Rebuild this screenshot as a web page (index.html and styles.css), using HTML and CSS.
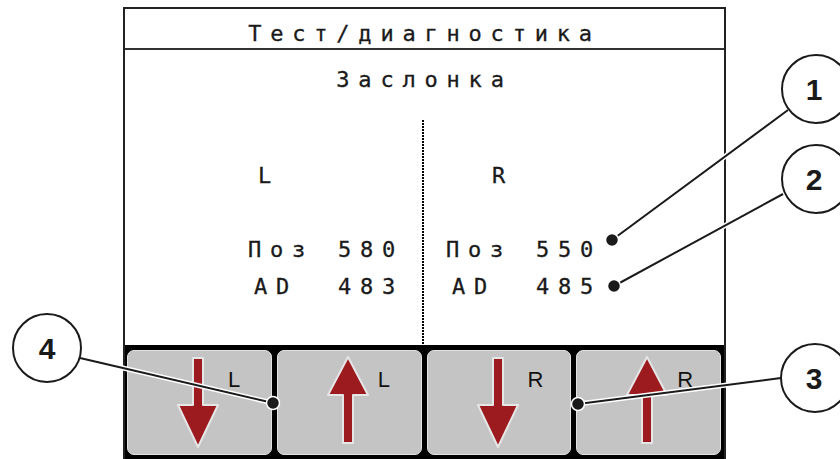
FILE: index.html
```html
<!DOCTYPE html>
<html lang="ru">

<head>
    <meta charset="UTF-8">
    <meta name="viewport" content="width=device-width, initial-scale=1.0">
    <title>Тест/диагностика - Заслонка</title>
    <link rel="stylesheet" href="styles.css">
</head>

<body>

    <div class="screen">
        <div class="title">Тест/диагностика</div>
        <div class="subtitle">Заслонка</div>

        <div class="panel">
            <div class="side side-left">
                <div class="side-name">L</div>
                <div class="reading"><span class="label">Поз</span><span class="value">580</span></div>
                <div class="reading reading-ad"><span class="label">AD</span><span class="value">483</span></div>
            </div>
            <div class="divider"></div>
            <div class="side side-right">
                <div class="side-name">R</div>
                <div class="reading"><span class="label">Поз</span><span class="value">550</span></div>
                <div class="reading reading-ad"><span class="label">AD</span><span class="value">485</span></div>
            </div>
        </div>

        <div class="softkeys">
            <div class="softkey">
                <svg class="arrow" width="44" height="94" viewBox="0 0 44 94">
                    <polygon points="17,3 27,3 27,50 42,50 22,92 2,50 17,50" />
                </svg>
                <span class="key-label">L</span>
            </div>
            <div class="softkey">
                <svg class="arrow" width="44" height="94" viewBox="0 0 44 94">
                    <polygon points="22,2 42,40 27,40 27,88 17,88 17,40 2,40" />
                </svg>
                <span class="key-label">L</span>
            </div>
            <div class="softkey">
                <svg class="arrow" width="44" height="94" viewBox="0 0 44 94">
                    <polygon points="17,3 27,3 27,50 42,50 22,92 2,50 17,50" />
                </svg>
                <span class="key-label">R</span>
            </div>
            <div class="softkey">
                <svg class="arrow" width="44" height="94" viewBox="0 0 44 94">
                    <polygon points="22,2 42,40 27,40 27,88 17,88 17,40 2,40" />
                </svg>
                <span class="key-label">R</span>
            </div>
        </div>
    </div>

    <!-- callouts over the screen -->
    <svg class="callouts" width="840" height="459" viewBox="0 0 840 459">
        <g class="halo">
            <line x1="612" y1="240" x2="788" y2="110" />
            <line x1="614" y1="286" x2="783" y2="194" />
            <line x1="578" y1="404" x2="781" y2="378" />
            <line x1="273" y1="403" x2="80" y2="358" />
        </g>
        <g class="leader">
            <line x1="612" y1="240" x2="788" y2="110" />
            <line x1="614" y1="286" x2="783" y2="194" />
            <line x1="578" y1="404" x2="781" y2="378" />
            <line x1="273" y1="403" x2="80" y2="358" />
        </g>
        <g class="dot">
            <circle cx="612" cy="240" r="6.5" />
            <circle cx="614" cy="286" r="6.5" />
            <circle cx="578" cy="404" r="6.5" />
            <circle cx="273" cy="403" r="6.5" />
        </g>
        <g class="bubble">
            <circle cx="816" cy="89" r="34" />
            <circle cx="816" cy="179" r="34" />
            <circle cx="815" cy="378" r="34" />
            <circle cx="47" cy="348" r="34" />
        </g>
        <g class="num">
            <text x="814" y="100">1</text>
            <text x="814" y="190">2</text>
            <text x="814" y="389">3</text>
            <text x="47" y="359">4</text>
        </g>
    </svg>

</body>

</html>
```

FILE: styles.css
```css
body {
    margin: 0;
    width: 840px;
    height: 459px;
    overflow: hidden;
    position: relative;
    background-color: #fff;
    font-family: "DejaVu Sans Mono", monospace;
}

.screen {
    margin: 7px 0 0 123px;
    width: 599px;
    height: 452px;
    border: 2px solid #222;
    border-bottom: none;
    display: flex;
    flex-direction: column;
    color: #1a1a1a;
    font-size: 22px;
    line-height: 22px;
    letter-spacing: 8.8px;
    -webkit-text-stroke: 0.3px #1a1a1a;
}

.title {
    padding: 14px 0 3px;
    text-align: center;
    border-bottom: 2px solid #333;
}

.subtitle {
    margin-top: 19px;
    text-align: center;
}

.panel {
    margin-top: 29px;
    height: 225px;
    display: flex;
}

.side {
    padding-top: 45px;
    box-sizing: border-box;
}

.side-left {
    width: 297px;
    padding-left: 123px;
}

.divider {
    width: 2px;
    background: repeating-linear-gradient(to bottom, #000 0 2px, transparent 2px 3px);
}

.side-right {
    flex: 1;
    padding-left: 22px;
}

.side-left .side-name {
    padding-left: 10px;
}

.side-right .side-name {
    padding-left: 46px;
}

.reading {
    display: flex;
    margin-top: 15px;
    white-space: pre;
}

.side-name + .reading {
    margin-top: 52px;
}

.label {
    width: 90px;
    box-sizing: border-box;
}

.reading-ad .label {
    padding-left: 6px;
}

.softkeys {
    flex: 1;
    background-color: #000;
    display: grid;
    grid-template-columns: repeat(4, 1fr);
    gap: 5px;
    padding: 5px 3px 4px 2px;
    align-content: start;
}

.softkey {
    height: 105px;
    box-sizing: border-box;
    background-color: #c4c4c4;
    border: 1px solid #e2e2e2;
    border-radius: 7px;
    display: flex;
    align-items: flex-start;
    padding: 4px 0 0 48px;
}

.arrow polygon {
    fill: #9b1b1f;
    stroke: #e6e6e6;
    stroke-width: 2;
    stroke-linejoin: round;
}

.key-label {
    margin: 14px 0 0 8px;
    font-family: "Liberation Sans", Arial, sans-serif;
    font-size: 22px;
    line-height: 22px;
    letter-spacing: 0;
    -webkit-text-stroke: 0;
    color: #111;
}

.callouts {
    position: absolute;
    left: 0;
    top: 0;
    pointer-events: none;
}

.halo line {
    stroke: #fff;
    stroke-width: 5;
}

.leader line {
    stroke: #1a1a1a;
    stroke-width: 2;
}

.dot circle {
    fill: #1a1a1a;
    stroke: #fff;
    stroke-width: 1.5;
}

.bubble circle {
    fill: #fff;
    stroke: #1a1a1a;
    stroke-width: 2;
}

.num text {
    font-family: "Liberation Sans", Arial, sans-serif;
    font-weight: bold;
    font-size: 30px;
    text-anchor: middle;
    fill: #1a1a1a;
}
```
